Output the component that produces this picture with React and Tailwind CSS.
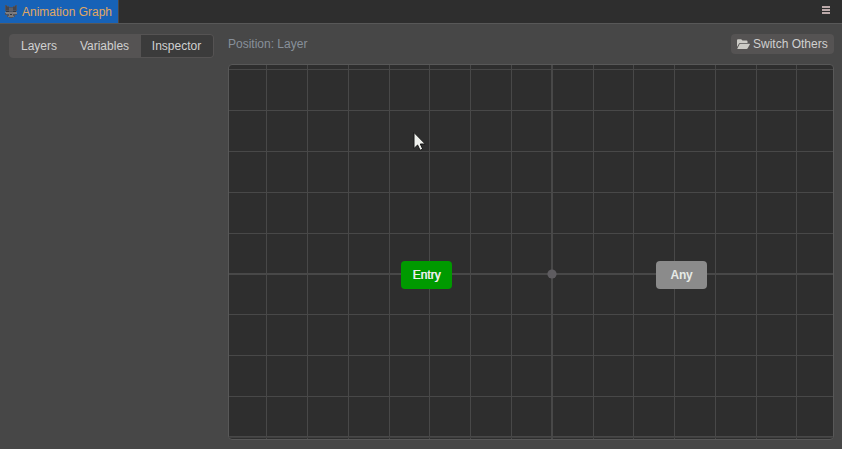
const COLUMNS = [266, 307, 348, 389, 429, 470, 511, 552, 593, 633, 674, 715, 756, 796];
const ROWS = [69, 110, 151, 192, 233, 273, 314, 355, 396, 436];

function FoxIcon() {
  return (
    <svg width="12" height="14" viewBox="0 0 12 14" className="shrink-0" shapeRendering="crispEdges">
      <path d="M0 0h2v1h2v1h4V1h2V0h2v6h-1v2h1v2h-2v2H8v1H4v-1H2v-2H0V8h1V6H0z" fill="#4a5364" />
      <path d="M1 1h1v1h2v1h4V2h2V1h1v4H8V4H4v1H1z" fill="#45454c" />
      <path d="M4 3h4v3H4z" fill="#5d5f68" />
      <path d="M1 6h3v1H1zM8 6h3v1H8z" fill="#34383f" />
      <path d="M0 7h4v2H1zM8 7h4v2H8z" fill="#7f7d80" />
      <path d="M4 7h4v4H4z" fill="#77777b" />
      <path d="M5 9h2v1H5z" fill="#30343c" />
      <path d="M3 11h6v1H3z" fill="#777779" />
    </svg>
  );
}

function FolderIcon() {
  return (
    <svg width="13" height="11" viewBox="0 0 13 11" className="shrink-0">
      <path d="M0 1.2Q0 .2 1 .2h3.2l1.3 1.4h4q1 0 1 1V4H3.2Q2.3 4 1.9 4.8L0 8z" fill="#cccbc6" />
      <path d="M3.4 4.8h9q.8 0 .4.7l-2.1 3.7q-.4.8-1.2.8H.8q-.7 0-.3-.7l1.9-3.7q.3-.8 1-.8z" fill="#cccbc6" />
    </svg>
  );
}

function Tab({ children, className }) {
  return (
    <button className={`flex h-full items-center justify-center whitespace-nowrap ${className}`}>
      {children}
    </button>
  );
}

function Graph() {
  return (
    <div className="relative h-[376px] w-[606px] overflow-hidden rounded-[4px] border border-[#585858] bg-[#2e2e2e]">
      <svg className="absolute -left-px -top-px" width="606" height="376" viewBox="228 64 606 376">
        <g shapeRendering="crispEdges">
          {COLUMNS.map((x) => (
            <path key={x} d={`M${x + 0.5} 65V439`} stroke="#484848" />
          ))}
          {ROWS.map((y) => (
            <path key={y} d={`M229 ${y + 0.5}H833`} stroke="#484848" />
          ))}
          <path d="M229 437.5H833" stroke="#404040" />
          <path d="M229 274H833M552 65V439" stroke="#484848" strokeWidth="2" />
        </g>
        <circle cx="552" cy="274" r="4.6" fill="#5e5c60" />
      </svg>
      <div className="absolute left-[172px] top-[196px] flex h-[28px] w-[51px] items-center justify-center rounded-[4px] bg-[#009a00] text-[#eeeeee] [text-shadow:0.4px_0_0_#eeeeee]">Entry</div>
      <div className="absolute left-[427px] top-[196px] flex h-[28px] w-[51px] items-center justify-center rounded-[4px] bg-[#8b8b8b] font-bold tracking-[-0.2px] text-[#e6eae6]">Any</div>
      <svg className="absolute left-[184px] top-[66px]" width="14" height="22" viewBox="0 0 14 22">
        <path d="M1 1.5v16l3.6-3.5 2.5 5.3 2.6-1.2-2.4-5.1h5z" fill="#eef0ec" stroke="#171717" strokeWidth="1" />
      </svg>
    </div>
  );
}

export default function App() {
  return (
    <div className="flex h-[449px] w-[842px] flex-col overflow-hidden bg-[#474747] font-['Liberation_Sans',Arial,sans-serif] text-[12px] leading-[14px] text-[#d0d0d0]">
      <header className="flex h-[24px] shrink-0 items-start justify-between border-b border-[#585858] bg-[#2e2e2e]">
        <div className="flex h-[23px] w-[119px] items-center gap-[5px] border-r border-[#4b4746] bg-[#1762b7] pl-[5px] text-[#e0a863]">
          <FoxIcon />
          <span className="whitespace-nowrap">Animation Graph</span>
        </div>
        <button className="mr-[12px] mt-[6px] flex h-[8px] w-[8px] flex-col justify-between">
          <span className="h-[2px] w-full bg-[#bba9a9]" />
          <span className="h-[2px] w-full bg-[#bba9a9]" />
          <span className="h-[2px] w-full bg-[#bba9a9]" />
        </button>
      </header>
      <main className="flex">
        <aside className="w-[228px] pl-[9px] pt-[10px]">
          <div className="flex h-[24px] w-[205px] overflow-hidden rounded-[4px] border border-[#555353] bg-[#555353]">
            <Tab className="w-[59px] pr-px">Layers</Tab>
            <Tab className="w-[72px] pr-px">Variables</Tab>
            <Tab className="w-[72px] bg-[#3b3b3b] pr-px">Inspector</Tab>
          </div>
        </aside>
        <section className="w-[606px] pt-[10px]">
          <div className="mb-[10px] flex h-[20px] items-center justify-between">
            <span className="text-[#87909a]">Position: Layer</span>
            <button className="flex h-[20px] w-[103px] items-center gap-[3px] rounded-[4px] bg-[#555353] pl-[6px]">
              <FolderIcon />
              <span className="whitespace-nowrap">Switch Others</span>
            </button>
          </div>
          <Graph />
        </section>
      </main>
    </div>
  );
}
